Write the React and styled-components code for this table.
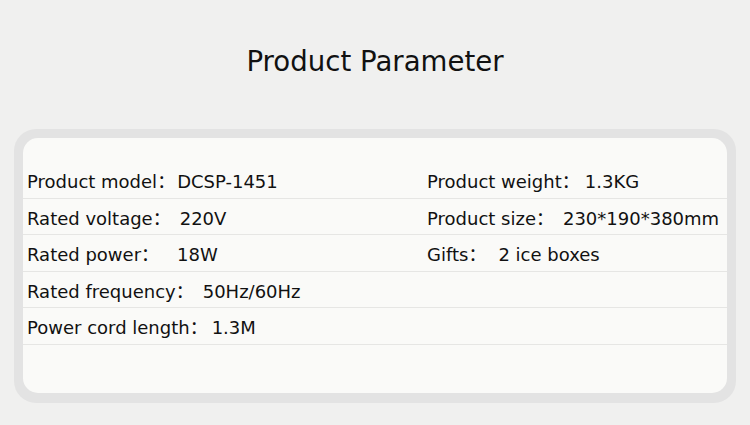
import styled, { createGlobalStyle } from "styled-components";

const rows = [
  [
    { label: "Product model", value: "DCSP-1451", gap: 2 },
    { label: "Product weight", value: "1.3KG", gap: 5 },
  ],
  [
    { label: "Rated voltage", value: "220V", gap: 9 },
    { label: "Product size", value: "230*190*380mm", gap: 9 },
  ],
  [
    { label: "Rated power", value: "18W", gap: 18 },
    { label: "Gifts", value: "2 ice boxes", gap: 12 },
  ],
  [{ label: "Rated frequency", value: "50Hz/60Hz", gap: 9 }, null],
  [{ label: "Power cord length", value: "1.3M", gap: 4 }, null],
];

const App = () => {
  return (
    <>
      <GlobalStyle />
      <Page>
        <Title>Product Parameter</Title>
        <Frame>
          <Card>
            {rows.map((row, i) => (
              <Row key={i}>
                {row.map((cell, j) => (
                  <Cell key={j}>
                    {cell && (
                      <>
                        <Label>{cell.label}：</Label>
                        <Value $gap={cell.gap}>{cell.value}</Value>
                      </>
                    )}
                  </Cell>
                ))}
              </Row>
            ))}
          </Card>
        </Frame>
      </Page>
    </>
  );
};

export default App;

const GlobalStyle = createGlobalStyle`
  html, body {
    margin: 0;
    padding: 0;
    background: #f0f0f0;
  }
`;

const Page = styled.div`
  width: 750px;
  height: 425px;
  box-sizing: border-box;
  padding: 0 14px;
  font-family: "DejaVu Sans", "Noto Sans CJK SC", sans-serif;
  color: #111;
  background: #f0f0ef;
`;

const Title = styled.h1`
  margin: 0;
  height: 129px;
  box-sizing: border-box;
  padding-top: 42px;
  text-align: center;
  font-size: 27.6px;
  font-weight: normal;
  line-height: 40px;
`;

const Frame = styled.div`
  height: 274px;
  box-sizing: border-box;
  padding: 9px 9px 10px;
  background: #e3e3e3;
  border-radius: 22px;
`;

const Card = styled.div`
  height: 100%;
  box-sizing: border-box;
  padding-top: 24px;
  background: #fafaf8;
  border-radius: 15px;
`;

const Row = styled.div`
  display: grid;
  grid-template-columns: 400px 1fr;
  height: 36.5px;
  box-sizing: border-box;
  border-bottom: 1px solid #e6e6e4;
`;

const Cell = styled.div`
  padding: 3px 0 0 4px;
  font-size: 18px;
  line-height: 34px;
  white-space: nowrap;
`;

const Label = styled.span``;

const Value = styled.span`
  display: inline-block;
  margin-left: ${(p) => p.$gap}px;
`;
